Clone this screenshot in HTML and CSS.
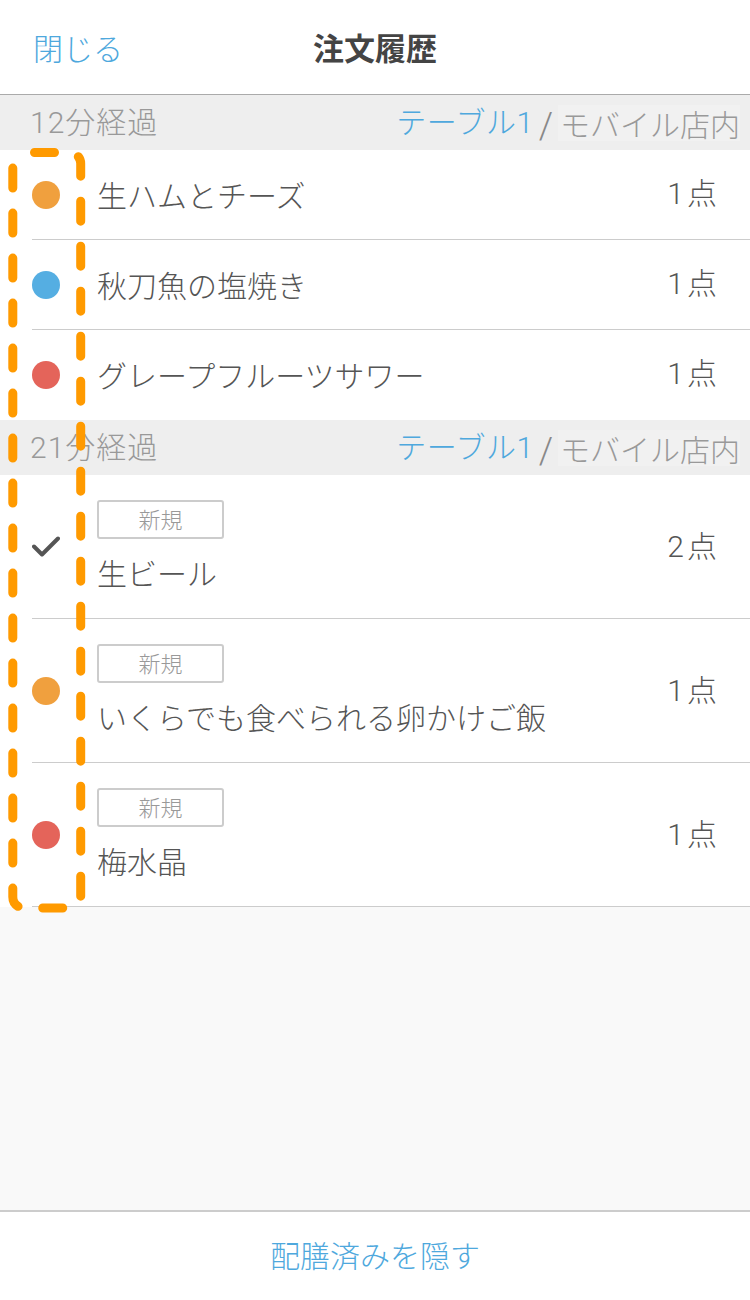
FILE: index.html
```html
<!DOCTYPE html>
<html lang="ja">
<head>
<meta charset="utf-8">
<title>注文履歴</title>
<link rel="stylesheet" href="styles.css">
</head>
<body>
<div class="app">
  <header class="nav">
    <span class="nav-close">閉じる</span>
    <h1 class="nav-title">注文履歴</h1>
    <span class="nav-spacer"></span>
  </header>

  <main class="list">
    <section class="group">
      <div class="group-head">
        <span class="elapsed">12分経過</span>
        <span class="place"><span class="table-name">テーブル1</span><span class="slash">/</span><span class="channel">モバイル店内</span></span>
      </div>
      <ul class="rows">
        <li class="row">
          <span class="status"><span class="dot dot-orange"></span></span>
          <div class="row-body"><span class="name">生ハムとチーズ</span></div>
          <span class="qty">1点</span>
        </li>
        <li class="row">
          <span class="status"><span class="dot dot-blue"></span></span>
          <div class="row-body"><span class="name">秋刀魚の塩焼き</span></div>
          <span class="qty">1点</span>
        </li>
        <li class="row">
          <span class="status"><span class="dot dot-red"></span></span>
          <div class="row-body"><span class="name">グレープフルーツサワー</span></div>
          <span class="qty">1点</span>
        </li>
      </ul>
    </section>

    <section class="group">
      <div class="group-head">
        <span class="elapsed">21分経過</span>
        <span class="place"><span class="table-name">テーブル1</span><span class="slash">/</span><span class="channel">モバイル店内</span></span>
      </div>
      <ul class="rows">
        <li class="row row-tall">
          <span class="status">
            <svg class="check" viewBox="0 0 28 22" width="28" height="22"><path d="M2 10.5 L10 18.5 L26 2.5" fill="none" stroke="#555" stroke-width="4" stroke-linecap="round" stroke-linejoin="round"/></svg>
          </span>
          <div class="row-body"><span class="badge">新規</span><span class="name">生ビール</span></div>
          <span class="qty">2点</span>
        </li>
        <li class="row row-tall">
          <span class="status"><span class="dot dot-orange"></span></span>
          <div class="row-body"><span class="badge">新規</span><span class="name">いくらでも食べられる卵かけご飯</span></div>
          <span class="qty">1点</span>
        </li>
        <li class="row row-tall">
          <span class="status"><span class="dot dot-red"></span></span>
          <div class="row-body"><span class="badge">新規</span><span class="name">梅水晶</span></div>
          <span class="qty">1点</span>
        </li>
      </ul>
    </section>
  </main>

  <footer class="footer">
    <span class="footer-action">配膳済みを隠す</span>
  </footer>

  <svg class="highlight" width="100" height="930" viewBox="0 0 100 930">
    <rect x="12.8" y="152.5" width="67.9" height="755.5" rx="11" ry="11" fill="none" stroke="#ff9a00" stroke-width="9" stroke-linecap="round" stroke-dasharray="20 25" stroke-dashoffset="-10.7"/>
  </svg>
</div>
</body>
</html>
```

FILE: styles.css
```css
* { box-sizing: border-box; }

html, body {
  margin: 0;
  padding: 0;
  background: #ffffff;
}

body {
  font-family: "Noto Sans CJK JP", "Noto Sans", "Liberation Sans", sans-serif;
  color: #555555;
}

.app {
  position: relative;
  width: 750px;
  height: 1300px;
  display: flex;
  flex-direction: column;
  overflow: hidden;
}

/* nav bar */
.nav {
  height: 95px;
  flex: none;
  display: grid;
  grid-template-columns: 1fr auto 1fr;
  align-items: center;
  padding: 0 33px 0 33px;
  border-bottom: 1px solid #aaaaaa;
  background: #ffffff;
}

.nav-close {
  font-size: 30px;
  font-weight: 300;
  color: #4ea8dd;
  line-height: 36px;
  justify-self: start;
}

.nav-title {
  margin: 0;
  font-size: 31px;
  font-weight: 700;
  color: #444444;
  line-height: 36px;
}

/* list */
.list {
  flex: 1;
  background: #f9f9f9;
}

.group-head {
  height: 55px;
  background: #eeeeee;
  display: flex;
  align-items: center;
  justify-content: space-between;
  padding: 1px 10px 0 30px;
  font-size: 30px;
  font-weight: 300;
  line-height: 36px;
  color: #999999;
}

.elapsed {
  font-family: "Roboto", "Noto Sans CJK JP", sans-serif;
  font-weight: 300;
  letter-spacing: 1px;
}

.place {
  display: flex;
  align-items: center;
}

.table-name {
  color: #4ea8dd;
  font-family: "Roboto", "Noto Sans CJK JP", sans-serif;
  font-weight: 300;
  letter-spacing: 0.5px;
}

.slash {
  color: #888888;
  font-family: "Roboto", sans-serif;
  font-weight: 300;
  font-size: 36px;
  margin: 6px 5px 0 5px;
  line-height: 36px;
}

.channel {
  background: #f1f1f1;
  padding: 0 0 0 2px;
}

.rows {
  list-style: none;
  margin: 0;
  padding: 0;
  background: #ffffff;
}

.row {
  height: 90px;
  margin-left: 32px;
  display: flex;
  align-items: center;
  border-bottom: 1px solid #cccccc;
  padding-bottom: 2px;
}

.group:not(:last-child) .row:last-child {
  border-bottom: none;
}

.row-tall {
  height: 144px;
  padding-bottom: 4px;
}

.status {
  width: 28px;
  flex: none;
  margin-right: 37px;
  display: flex;
  align-items: center;
  justify-content: center;
  margin-top: 2px;
}

.row-tall .status {
  margin-top: 4px;
}

.dot {
  width: 28px;
  height: 28px;
  border-radius: 50%;
  display: block;
}

.dot-orange { background: #f0a03e; }
.dot-blue { background: #55aee2; }
.dot-red { background: #e4645a; }

.check {
  display: block;
}

.row-body {
  flex: 1;
  display: flex;
  flex-direction: column;
  align-items: flex-start;
}

.name {
  font-size: 30px;
  font-weight: 300;
  line-height: 36px;
  color: #555555;
}

.badge {
  width: 127px;
  height: 39px;
  border: 2px solid #cccccc;
  border-radius: 3px;
  display: flex;
  align-items: center;
  justify-content: center;
  font-size: 22px;
  font-weight: 300;
  color: #999999;
  margin-bottom: 15px;
  padding-bottom: 2px;
}

.qty {
  flex: none;
  padding-right: 33px;
  font-family: "Roboto", "Noto Sans CJK JP", sans-serif;
  font-size: 30px;
  font-weight: 300;
  line-height: 36px;
  letter-spacing: 3px;
  margin-right: -3px;
  color: #555555;
}

.row-tall .qty {
  margin-top: 4px;
}

/* footer */
.footer {
  height: 90px;
  flex: none;
  border-top: 2px solid #cccccc;
  background: #ffffff;
  display: flex;
  align-items: center;
  justify-content: center;
}

.footer-action {
  font-size: 30px;
  font-weight: 300;
  color: #4ea8dd;
  line-height: 36px;
  margin-bottom: 4px;
}

/* annotation overlay */
.highlight {
  position: absolute;
  left: 0;
  top: 0;
  pointer-events: none;
}
```
